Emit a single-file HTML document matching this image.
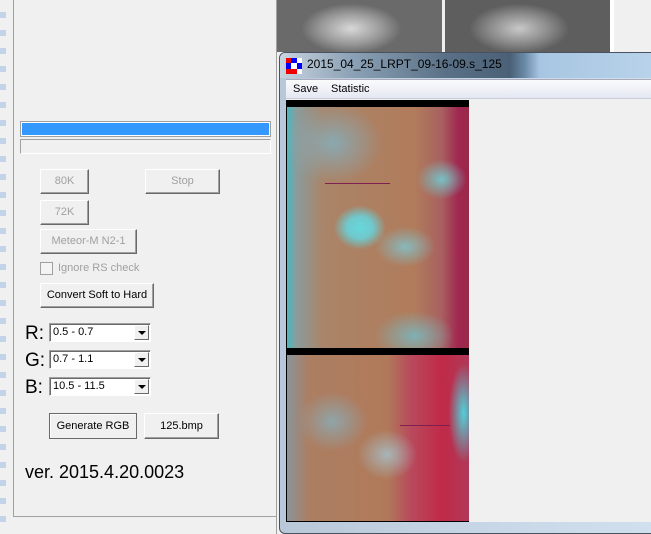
<!DOCTYPE html>
<html><head><style>
*{margin:0;padding:0;box-sizing:border-box}
body{width:651px;height:534px;overflow:hidden;background:#f0f0f0;position:relative;font-family:"Liberation Sans",sans-serif;font-size:11px}
.a{position:absolute}
.btn{position:absolute;background:#f0f0f0;border:1px solid;border-color:#fff #696969 #696969 #fff;box-shadow:inset -1px -1px 0 #a0a0a0;text-align:center;color:#000;font-size:11px}
.dis{color:#a0a0a0}
.cb{position:absolute;width:102px;height:19px;background:#fff;border:1px solid;border-color:#a0a0a0 #fff #fff #a0a0a0;box-shadow:inset 1px 1px 0 #696969;font-size:11px;padding:2px 3px}
.cb i{position:absolute;right:1px;top:1px;width:15px;height:15px;background:#f0f0f0;border:1px solid;border-color:#fff #696969 #696969 #fff}
.cb i:after{content:"";position:absolute;left:3px;top:5px;border-left:4px solid transparent;border-right:4px solid transparent;border-top:4px solid #000}
.lab{position:absolute;font-size:19px;left:25px}
</style></head><body>
<div class="a" style="left:0;top:0;width:6px;height:534px;background:repeating-linear-gradient(#f0f0f0 0 12px,#c4d4e8 12px 18px)"></div>
<div class="a" style="left:13px;top:0;width:1px;height:517px;background:#a0a0a0"></div>
<div class="a" style="left:14px;top:516px;width:263px;height:1px;background:#a0a0a0"></div>
<div class="a" style="left:276px;top:0;width:1px;height:534px;background:#a0a0a0"></div>
<div class="a" style="left:277px;top:0;width:165px;height:52px;background:radial-gradient(ellipse 50px 25px at 45% 55%,#d8d8d8 0,#9a9a9a 60%,transparent 100%),#6a6a6a"></div>
<div class="a" style="left:442px;top:0;width:3px;height:52px;background:#eee"></div>
<div class="a" style="left:445px;top:0;width:165px;height:52px;background:radial-gradient(ellipse 50px 25px at 45% 55%,#c8c8c8 0,#8a8a8a 60%,transparent 100%),#5e5e5e"></div>
<div class="a" style="left:610px;top:0;width:4px;height:52px;background:#fff"></div>

<div class="a" style="left:20px;top:121px;width:251px;height:16px;border:1px solid #a0a0a0;background:#fff"><div style="margin:1px;height:12px;background:#3399ff"></div></div>
<div class="a" style="left:20px;top:139px;width:251px;height:15px;border:1px solid #a0a0a0;border-right-color:#fff;border-bottom-color:#fff"></div>

<div class="btn dis" style="left:40px;top:169px;width:49px;height:25px;line-height:23px">80K</div>
<div class="btn dis" style="left:145px;top:169px;width:75px;height:25px;line-height:23px">Stop</div>
<div class="btn dis" style="left:40px;top:200px;width:49px;height:25px;line-height:23px">72K</div>
<div class="btn dis" style="left:40px;top:229px;width:97px;height:25px;line-height:23px">Meteor-M N2-1</div>
<div class="a" style="left:40px;top:262px;width:13px;height:13px;border:1px solid #a0a0a0;background:#f4f4f4"></div>
<div class="a dis" style="left:58px;top:262px">Ignore RS check</div>
<div class="btn" style="left:40px;top:283px;width:114px;height:25px;line-height:23px">Convert Soft to Hard</div>

<div class="lab" style="top:323px">R:</div>
<div class="cb" style="left:49px;top:323px">0.5 - 0.7<i></i></div>
<div class="lab" style="top:350px">G:</div>
<div class="cb" style="left:49px;top:350px">0.7 - 1.1<i></i></div>
<div class="lab" style="top:377px">B:</div>
<div class="cb" style="left:49px;top:377px">10.5 - 11.5<i></i></div>

<div class="btn" style="left:49px;top:413px;width:88px;height:26px;line-height:24px;border-color:#696969;box-shadow:inset 1px 1px 0 #fff">Generate RGB</div>
<div class="btn" style="left:144px;top:413px;width:75px;height:26px;line-height:24px">125.bmp</div>
<div class="a" style="left:25px;top:462px;font-size:18px">ver. 2015.4.20.0023</div>

<div class="a" style="left:279px;top:52px;width:380px;height:482px;border:1px solid #4a5260;border-radius:6px 0 0 6px;background:linear-gradient(90deg,#b8c8d8,#c8d8e8 60%,#d0e0ee)"></div>
<div class="a" style="left:280px;top:53px;width:371px;height:25px;border-radius:5px 0 0 0;background:linear-gradient(90deg,#c8d4e0 0,#8aa0b4 20%,#5a7086 45%,#4a6076 62%,#6a8aa8 66%,#a8c6e2 70%,#b8d2ea 100%)"></div>
<div class="a" style="left:286px;top:58px;width:16px;height:16px;background:#fff"></div>
<div class="a" style="left:286px;top:58px;width:5px;height:5px;background:#e00"></div>
<div class="a" style="left:291px;top:58px;width:6px;height:5px;background:#00f"></div>
<div class="a" style="left:286px;top:63px;width:5px;height:6px;background:#00f"></div>
<div class="a" style="left:297px;top:63px;width:5px;height:6px;background:#00f"></div>
<div class="a" style="left:291px;top:69px;width:6px;height:5px;background:#e00"></div>
<div class="a" style="left:286px;top:69px;width:5px;height:5px;background:#e00"></div>
<div class="a" style="left:307px;top:57px;font-size:12px;color:#000">2015_04_25_LRPT_09-16-09.s_125</div>
<div class="a" style="left:286px;top:79px;width:365px;height:443px;background:#f0f0f0;border-top:1px solid #aab"></div>
<div class="a" style="left:286px;top:80px;width:365px;height:19px;background:linear-gradient(#fbfbfd,#e4e8f2);border-bottom:1px solid #c8ccd6"></div>
<div class="a" style="left:293px;top:83px">Save</div>
<div class="a" style="left:331px;top:83px">Statistic</div>

<div class="a" style="left:286px;top:100px;width:183px;height:422px;background:#000"></div>
<div class="a" style="left:287px;top:107px;width:182px;height:241px;background:
radial-gradient(ellipse 26px 22px at 40% 50%,#66d8dc 0,#70c8cc 50%,transparent 100%),
radial-gradient(ellipse 30px 20px at 65% 58%,#88b8bc 0,transparent 100%),
radial-gradient(ellipse 50px 40px at 25% 15%,#8aa8b0 0,transparent 100%),
radial-gradient(ellipse 40px 25px at 70% 95%,#80b0b4 0,transparent 100%),
radial-gradient(ellipse 25px 20px at 85% 30%,#78c0c4 0,transparent 100%),
linear-gradient(90deg,#4ab8c0 0,#8a9c9c 5%,#aa8468 20%,#b07c5c 70%,#a86060 85%,#a02850 94%,#9a2848 100%)"></div>
<div class="a" style="left:325px;top:183px;width:65px;height:1px;background:#802050"></div>
<div class="a" style="left:287px;top:355px;width:182px;height:166px;background:
radial-gradient(ellipse 30px 25px at 55% 60%,#a8b4b8 0,transparent 100%),
radial-gradient(ellipse 35px 30px at 25% 40%,#90a4a8 0,transparent 100%),
radial-gradient(ellipse 15px 50px at 97% 35%,#50d0d8 0,transparent 100%),
linear-gradient(90deg,#8a9498 0,#ac7e62 12%,#b07a5a 55%,#b84a5c 68%,#c02a48 85%,#b03858 100%)"></div>
<div class="a" style="left:400px;top:425px;width:50px;height:1px;background:#802050"></div>
</body></html>
